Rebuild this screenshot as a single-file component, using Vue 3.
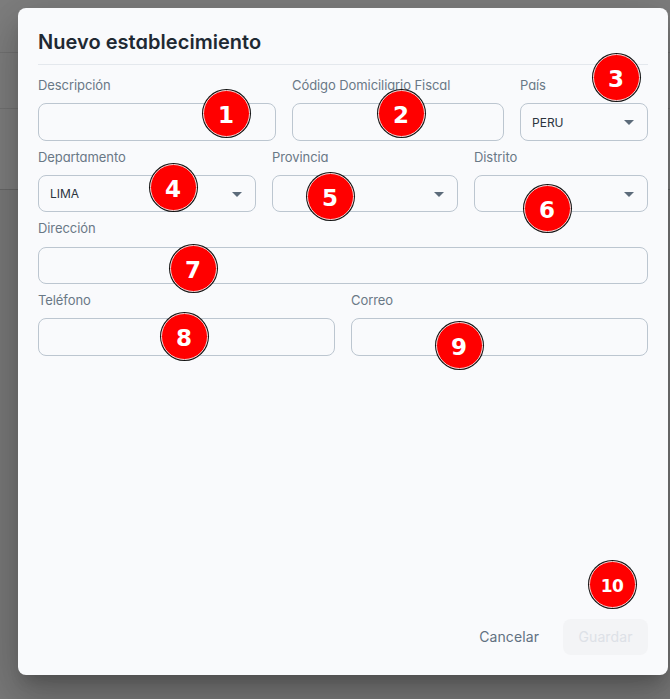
<script setup>
const rows = [
  {
    columns: '238px 212px 128px',
    fields: [
      { label: 'Descripción' },
      { label: 'Código Domiciliario Fiscal' },
      { label: 'País', select: true, value: 'PERU' },
    ],
  },
  {
    columns: '218px 186px 174px',
    fields: [
      { label: 'Departamento', select: true, value: 'LIMA' },
      { label: 'Provincia', select: true, value: '' },
      { label: 'Distrito', select: true, value: '' },
    ],
  },
  { columns: '610px', fields: [{ label: 'Dirección' }] },
  { columns: '297px 297px', fields: [{ label: 'Teléfono' }, { label: 'Correo' }] },
]

const markers = [
  [226, 113], [401, 113], [616, 77], [173, 187], [330, 196],
  [547, 208], [193, 268], [184, 336], [459, 345], [612, 584],
]
</script>

<template>
  <div class="backdrop">
    <div class="page-lines"><i></i><i></i><i></i></div>
    <section class="dialog" role="dialog">
      <h1 class="title">Nuevo establecimiento</h1>
      <div class="form">
        <div v-for="(row, r) in rows" :key="r" class="row" :style="{ gridTemplateColumns: row.columns }">
          <div v-for="field in row.fields" :key="field.label" class="field">
            <span class="label">{{ field.label }}</span>
            <div class="control">
              <span class="value">{{ field.value }}</span>
              <svg v-if="field.select" class="arrow" viewBox="0 0 10 5" width="10" height="5">
                <path d="M0 0h10L5 5z" fill="#5c6b7a" />
              </svg>
            </div>
          </div>
        </div>
      </div>
      <footer class="actions">
        <button class="cancel">Cancelar</button>
        <button class="save" disabled>Guardar</button>
      </footer>
    </section>
    <span
      v-for="([x, y], i) in markers"
      :key="i"
      class="marker"
      :class="{ wide: i === 9 }"
      :style="{ left: x + 'px', top: y + 'px' }"
    >{{ i + 1 }}</span>
  </div>
</template>

<style>
body {
  overflow: hidden;
}
</style>

<style scoped>
.backdrop {
  position: relative;
  box-sizing: border-box;
  width: 670px;
  height: 699px;
  padding: 8px 2px 24px 18px;
  overflow: hidden;
  background: #7c7c7c;
  font-family: Inter, sans-serif;
}
.page-lines {
  position: absolute;
  inset: 0;
  background: linear-gradient(#7e7e7e 0 189px, #797979 189px);
}
.page-lines i {
  position: absolute;
  left: 0;
  width: 100%;
  top: 52px;
  height: 1px;
  background: #727272;
}
.page-lines i:nth-child(2) {
  top: 108px;
}
.page-lines i:nth-child(3) {
  top: 189px;
  background: #686868;
}
.dialog {
  position: relative;
  box-sizing: border-box;
  display: flex;
  flex-direction: column;
  width: 650px;
  height: 667px;
  padding: 20px;
  border-radius: 8px;
  background: #f9fafc;
  box-shadow: 0 11px 15px -7px rgba(0, 0, 0, 0.2), 0 24px 38px 3px rgba(0, 0, 0, 0.14),
    0 9px 46px 8px rgba(0, 0, 0, 0.12);
}
.title {
  margin: 0;
  height: 36px;
  border-bottom: 1px solid #e4e8ed;
  color: #1f2933;
  font-size: 20px;
  font-weight: 600;
  line-height: 29px;
  letter-spacing: 0.04px;
  font-feature-settings: 'cv11';
}
.form {
  display: flex;
  flex: 1;
  flex-direction: column;
  padding-top: 10.1px;
}
.row {
  display: grid;
  column-gap: 16px;
  height: 71.67px;
}
.label {
  display: block;
  height: 28.3px;
  color: #697886;
  font-size: 13px;
  line-height: 20px;
  letter-spacing: -0.08px;
  white-space: nowrap;
  font-feature-settings: 'cv11';
}
.control {
  box-sizing: border-box;
  display: flex;
  align-items: center;
  justify-content: space-between;
  height: 37.3px;
  padding: 0 13px 0 11px;
  border: 1px solid #bcc6d0;
  border-radius: 8px;
}
.value {
  color: #2b343e;
  font-size: 12px;
}
.arrow {
  display: block;
  margin-top: 1px;
}
.actions {
  display: flex;
  justify-content: flex-end;
  gap: 8px;
}
button {
  height: 36px;
  padding: 0 16px;
  border: 0;
  border-radius: 8px;
  background: transparent;
  color: #617181;
  font: 400 14px/36px Inter, sans-serif;
  letter-spacing: 0.1px;
}
.save {
  width: 85px;
  padding: 0;
  background: #f3f4f6;
  color: #dde1e7;
}
.marker {
  position: absolute;
  box-sizing: border-box;
  width: 47px;
  height: 47px;
  margin: -23.5px 0 0 -23.5px;
  border: 1px solid #f8dada;
  border-radius: 50%;
  background: #f00;
  box-shadow: 0 0 0 1px #111;
  color: #fff;
  font: bold 23px/49px 'DejaVu Sans', sans-serif;
  text-align: center;
}
.wide {
  font-size: 17px;
  letter-spacing: -0.6px;
}
</style>
